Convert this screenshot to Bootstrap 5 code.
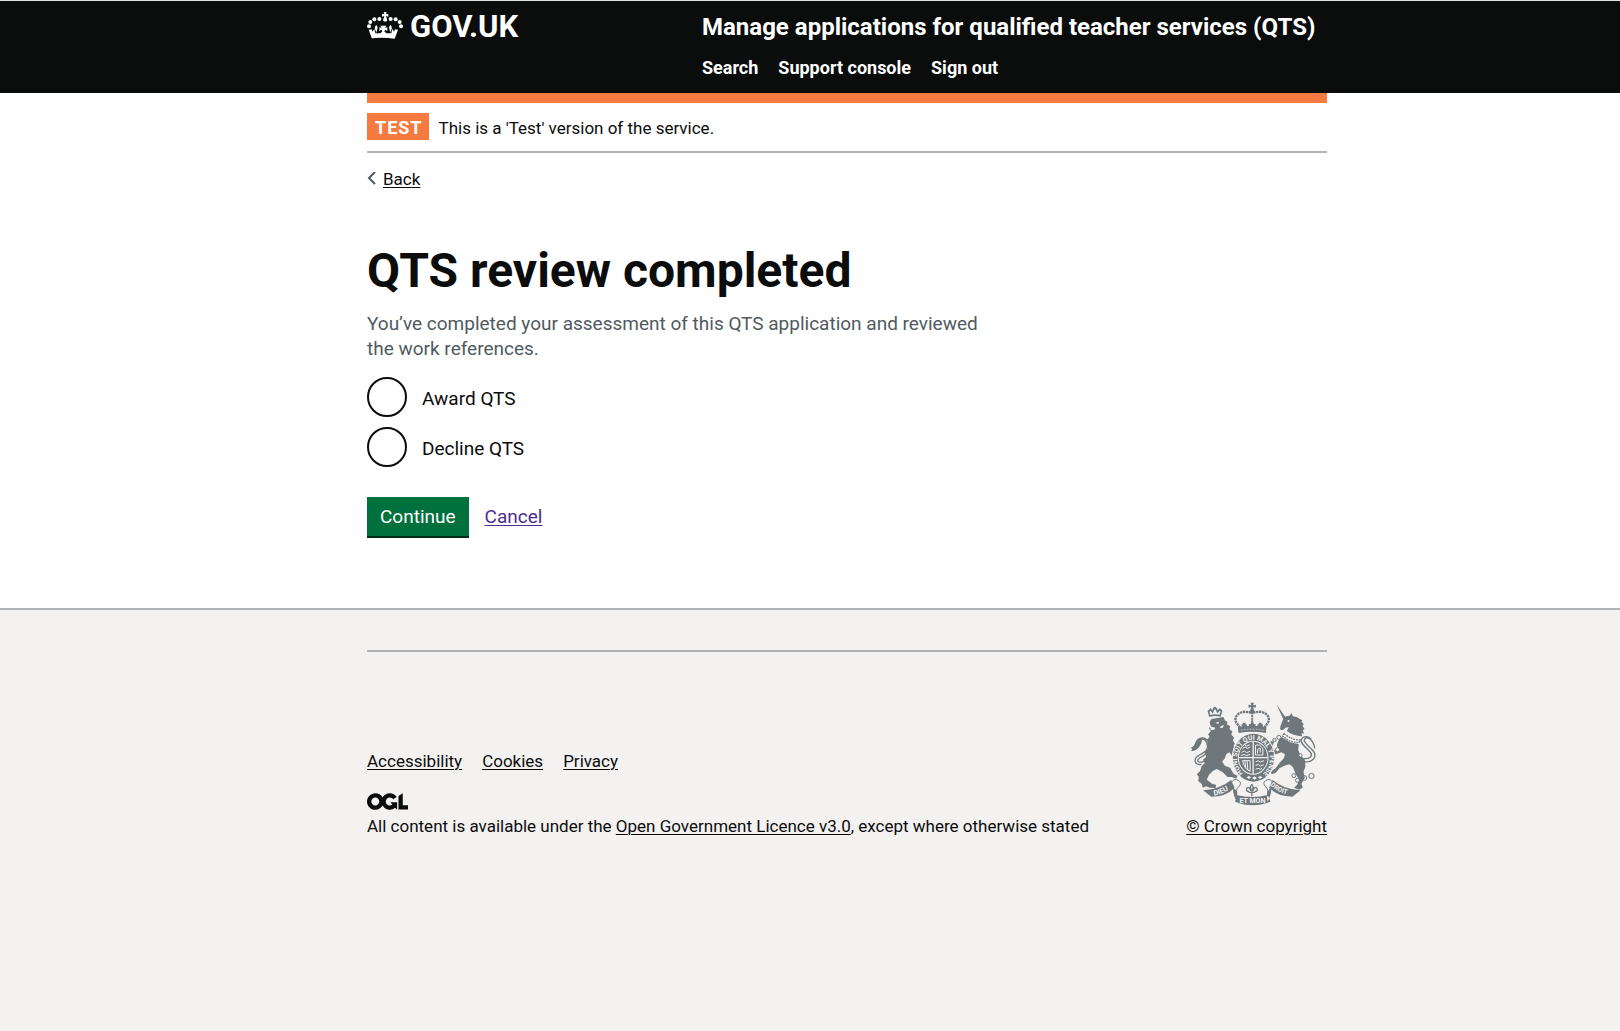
<!DOCTYPE html>
<html lang="en">
<head>
<meta charset="utf-8">
<meta name="viewport" content="width=device-width, initial-scale=1">
<title>QTS review completed</title>
<link rel="stylesheet" href="https://cdn.jsdelivr.net/npm/bootstrap@5.3.0/dist/css/bootstrap.min.css">
<style>
:root { --ink: #0b0c0c; --line: #b1b4b6; --tag: #f77a40; }
body { font-family: Roboto, "Liberation Sans", sans-serif; font-size: 17px; line-height: 20px; color: var(--ink); background: #f3f2f1; }
.page-width { max-width: 960px; }
.page-shell { padding-left: 74px; }
a { color: var(--ink); text-underline-offset: 2px; text-decoration-thickness: 1px; }
.masthead { background: var(--ink); border-top: 1px solid #dfe7e2; padding-bottom: 15px; }
.masthead a { color: #fff; text-decoration: none; }
.masthead-brand { width: 335px; padding-top: 11px; gap: 7px; }
.brand-name { font-size: 31px; line-height: 30px; font-weight: 700; }
.service-block { padding-top: 11px; }
.service-name { font-size: 24px; line-height: 30px; font-weight: 700; }
.service-nav { font-size: 18px; line-height: 21px; font-weight: 700; padding-top: 15px; }
.nav-gap { gap: 20px; }
.test-strip { height: 10px; background: var(--tag); }
.phase-banner { border-bottom: 2px solid var(--line); padding: 10px 0 11px; gap: 10px; }
.phase-tag { background: var(--tag); color: #fff; font-weight: 700; font-size: 18px; line-height: 25px; padding: 2px 6px 0 8px; letter-spacing: 1px; }
.back-link { gap: 6px; }
.main-area { padding: 56px 0 72px; }
h1 { font-size: 48px; line-height: 50px; font-weight: 700; margin-bottom: 15px; }
.hint-text { font-size: 19px; line-height: 25px; color: #505a5f; max-width: 630px; }
.choice-list { gap: 10px; }
.choice-label { font-size: 19px; line-height: 25px; padding: 2px 0 0 15px; }
.form-check-input.choice { width: 40px; height: 40px; border: 2px solid var(--ink); margin: 0; float: none; }
.action-row { margin-top: 30px; gap: 16px; }
.btn-go { font-size: 19px; line-height: 19px; color: #fff; background: #00703c; border: 0; border-radius: 0; box-shadow: 0 2px 0 #002d18; padding: 10px 13px; }
.btn-go:hover { background: #005a30; color: #fff; }
.cancel-link { color: #4c2c92; font-size: 19px; }
.page-footer { border-top: 2px solid var(--line); }
.page-footer hr { border-top: 2px solid var(--line); opacity: 1; margin: 40px 0 50px; }
.ogl-logo { margin: 22px 0 6px; }
.crest { margin: 0 10px 10px 0; overflow: visible; }
.crest text { font-family: Roboto, sans-serif; font-weight: 700; fill: #f3f2f1; }
</style>
</head>
<body>
<header class="masthead page-shell">
  <div class="page-width mx-auto d-flex">
    <a href="#" class="masthead-brand d-flex align-items-start" aria-label="GOV.UK">
      <svg width="36" height="27" viewBox="0 0 108 81" fill="#fff" aria-hidden="true">
        <path d="M50 0h9l-2 7 7-2v9l-7-2 4 13a7 7 0 0 1-13 0l4-13-7 2V5l7 2z"/>
        <circle cx="37" cy="21" r="6"/><circle cx="71" cy="21" r="6"/>
        <circle cx="22" cy="22" r="6"/><circle cx="86" cy="22" r="6"/>
        <circle cx="10" cy="30" r="6"/><circle cx="98" cy="30" r="6"/>
        <circle cx="6" cy="43" r="6"/><circle cx="102" cy="43" r="6"/>
        <path d="M15 80L5 53l9-1 3 7 5-9 3 14 4-1-4-9c-3-7-1-12 3-15 4 4 5 9 2 15l-2 9 12 1 6-6-3-5-6 4V45l7 4-4-8h18l-4 8 7-4v12l-6-4-3 5 6 6 12-1-2-9c-3-6-2-11 2-15 4 3 6 8 3 15l-4 9 4 1 3-14 5 9 3-7 9 1-10 27c-26-4-52-4-78 0z"/>
      </svg>
      <span class="brand-name">GOV.UK</span>
    </a>
    <div class="service-block">
      <a href="#" class="service-name d-block">Manage applications for qualified teacher services (QTS)</a>
      <nav class="service-nav nav-gap d-flex">
        <a href="#">Search</a><a href="#">Support console</a><a href="#">Sign out</a>
      </nav>
    </div>
  </div>
</header>

<div class="bg-white page-shell">
  <div class="page-width mx-auto">
    <div class="test-strip"></div>
    <div class="phase-banner d-flex align-items-baseline">
      <strong class="phase-tag">TEST</strong>
      <span>This is a 'Test' version of the service.</span>
    </div>
    <a href="#" class="back-link d-inline-flex align-items-center mt-3 text-decoration-none">
      <svg width="10" height="14" viewBox="0 0 10 14" fill="none" stroke="#505a5f" stroke-width="2" aria-hidden="true"><path d="M8 0L2 6l6 6"/></svg>
      <span class="text-decoration-underline">Back</span>
    </a>
    <main class="main-area">
      <h1>QTS review completed</h1>
      <form>
        <p class="hint-text mb-3">You’ve completed your assessment of this QTS application and reviewed the work references.</p>
        <div class="choice-list d-flex flex-column">
          <div class="d-flex align-items-center">
            <input class="form-check-input choice" type="radio" name="decision" id="award">
            <label class="choice-label" for="award">Award QTS</label>
          </div>
          <div class="d-flex align-items-center">
            <input class="form-check-input choice" type="radio" name="decision" id="decline">
            <label class="choice-label" for="decline">Decline QTS</label>
          </div>
        </div>
        <div class="action-row d-flex align-items-center">
          <button type="submit" class="btn btn-go">Continue</button>
          <a href="#" class="cancel-link">Cancel</a>
        </div>
      </form>
    </main>
  </div>
</div>

<footer class="page-footer page-shell">
  <div class="page-width mx-auto">
    <hr>
    <div class="d-flex justify-content-between align-items-end">
      <div>
        <nav class="nav-gap d-flex"><a href="#">Accessibility</a><a href="#">Cookies</a><a href="#">Privacy</a></nav>
        <svg class="ogl-logo d-block" width="41" height="17" viewBox="0 0 483 196" fill="#0b0c0c" role="img" aria-label="OGL"><path d="M421.500 142.800V.1l-50.700 32.300v161.100h112.400v-50.700zm-122.300-9.600A47.120 47.120 0 0 1 221 97.800c0-26 21.100-47.100 47.100-47.100 16.700 0 31.400 8.700 39.700 21.800l42.700-27.200A97.630 97.630 0 0 0 268.100 0c-36.500 0-68.300 20.100-85.100 49.700A98 98 0 0 0 97.800 0C43.900 0 0 43.900 0 97.800s43.900 97.800 97.800 97.800c36.500 0 68.300-20.100 85.100-49.700a97.760 97.760 0 0 0 149.600 25.400l19.400 22.200h3v-87.800h-80l24.300 27.500zM97.800 145c-26 0-47.100-21.100-47.100-47.100s21.100-47.100 47.100-47.100 47.100 21.100 47.100 47.100S123.800 145 97.800 145"/></svg>
        <div>All content is available under the <a href="#">Open Government Licence v3.0</a>, except where otherwise stated</div>
      </div>
      <div class="d-flex flex-column align-items-end">
        <svg class="crest" width="127" height="104" viewBox="60 183 380 312" fill="#6f777b" aria-hidden="true">
          <!-- central crown -->
          <path d="M241 185h10l-2 8 8-2v9l-8-2 2 8h-10l2-8-8 2v-9l8 2z"/>
          <circle cx="246" cy="211" r="7"/>
          <g fill="none" stroke="#6f777b">
            <path d="M243 216C214 204 190 224 197 241c3 9 11 13 14 23M249 216c29-12 53 8 46 25-3 9-11 13-14 23" stroke-width="7" stroke-dasharray="7 2"/>
            <path d="M246 214v40" stroke-width="6" stroke-dasharray="6 2"/>
            <path d="M222 264v-19m-8 9h16M270 264v-19m-8 9h16M246 262v-18m-10 9h20" stroke-width="8"/>
          </g>
          <path d="M203 259q43-10 86 0l-2 17q-41-8-82 0z"/>
          <path d="M212 268q34-7 68 0" fill="none" stroke="#f3f2f1" stroke-width="2" stroke-dasharray="5 4"/>
          <!-- lion -->
          <path d="M119 225l-4-14 6-6 6 8 4-10h7l4 10 7-8 5 5-4 14q-16-4-31 1z" fill="none" stroke="#6f777b" stroke-width="5"/>
          <circle cx="134" cy="201" r="4"/>
          <path d="M124 234L160 228L164 238L172 243L170 250L180 256L178 264L187 272L183 280L192 290L188 298L194 308L190 316L198 322L196 334L204 338L198 350L186 346L178 334L168 340L164 352L156 362L164 374L180 380L190 398L202 404L198 413L184 408L172 408L158 394L140 384L128 390L116 402L110 416L126 428L138 432L136 441L118 440L108 436L98 440L94 428L84 420L86 408L80 400L90 390L94 376L104 366L98 356L108 348L104 334L112 324L114 312L108 310L114 302L110 296L118 288L114 280L122 270L116 262L122 256L118 244z"/>
          <path d="M136 245l11-3-3 7zM151 256l10-4-3 8-8 1zM119 256l16 4-2 6-11 1z" fill="#f3f2f1"/>
          <g fill="none" stroke="#6f777b" stroke-width="4">
            <path d="M94 370C70 374 70 352 86 343c14-7 28-13 26-30-2-12-9-20-18-19M102 362c-18 4-25-2-14-11 16-8 31-18 30-36-2-14-10-25-22-24"/>
          </g>
          <path d="M100 290q-18-3-25 15-2 10-13 15l4 4-3 7q18-2 26-16 6-9 7-20z"/>
          <!-- unicorn -->
          <path d="M319 190l29 42-8 4zM340 232l8-6 10-2 6-8 4 10 12 2 9 6 8 4-3 4 7 8-4 4 6 10-5 4 4 10-8-2 2 10c-18-2-34-6-46-16l6-12-10 2-8 8-9-3 2-10z"/>
          <path d="M342 278q24 20 48 19l-3 8q-28 0-50-20z" fill="none" stroke="#6f777b" stroke-width="4" stroke-dasharray="5 3"/>
          <circle cx="355" cy="240" r="3" fill="#f3f2f1"/>
          <path d="M334 288L360 304L386 310L384 326L390 342L404 356L406 376L400 392L404 410L394 428L398 440L386 446L372 440L382 430L386 414L376 398L368 378L358 370L342 374L328 382L316 396L304 400L302 392L316 382L328 366L342 350L344 340L334 334L316 340L308 336L304 345L296 339L302 322L296 311L302 300L312 302L306 316L314 328L326 328L320 312L324 300z"/>
          <g fill="none" stroke="#6f777b" stroke-width="4">
            <path d="M402 362c22 4 38-12 30-28-8-14-26-22-30-36 3-15 26-8 32 24M400 352c18 4 28-8 22-16-8-12-26-22-29-36 2-18 22-16 31-4"/>
            <circle cx="424" cy="405" r="8" stroke-width="3"/><circle cx="403" cy="411" r="7" stroke-width="3"/><circle cx="382" cy="418" r="6" fill="#f3f2f1" stroke-width="3"/><circle cx="371" cy="404" r="6" fill="#f3f2f1" stroke-width="3"/><circle cx="326" cy="289" r="6" fill="#f3f2f1" stroke-width="3"/><circle cx="313" cy="297" r="5" fill="#f3f2f1" stroke-width="3"/><circle cx="322" cy="326" r="6" fill="#f3f2f1" stroke-width="3"/><circle cx="391" cy="343" r="5" fill="#f3f2f1" stroke-width="3"/>
          </g>
          <!-- garter and shield -->
          <ellipse cx="250" cy="350" rx="65" ry="75" fill="#f3f2f1"/>
          <ellipse cx="250" cy="350" rx="62" ry="72"/>
          <path id="garter" d="M219 396A49 56 0 1 1 281 396" fill="none"/>
          <text font-size="20"><textPath href="#garter">HONI SOIT QUI MAL Y PENSE</textPath></text>
          <ellipse cx="249" cy="350" rx="46" ry="51" fill="#f3f2f1"/>
          <ellipse cx="249" cy="350" rx="43" ry="48"/>
          <path d="M249 302v96M206 350h86" stroke="#f3f2f1" stroke-width="4"/>
          <g fill="none" stroke="#f3f2f1" stroke-width="3">
            <path d="M217 323l8-5 6 4 9-4M214 334l9-4 6 5 11-4M212 343l10-2 7 3 11-4M224 312l6 3 9-4"/>
            <path d="M256 363l8-4 6 4 12-4M256 374l9-4 6 5 10-4M256 385l8-3 6 3 6-4"/>
            <path d="M256 312h12l10 10v20h-22zM262 337v-12l8-4v14"/>
            <path d="M217 359h23v32q-17-6-23-32zM224 360l3 22M231 360l2 27"/>
          </g>
          <path d="M229 409l7-4 7 4-7 5zM246 411l7-5 7 5-7 5zM263 409l7-4 7 4-7 5z" fill="#f3f2f1"/>
          <!-- rose and motto ribbon -->
          <g fill="none" stroke="#6f777b" stroke-width="4">
            <path d="M245 430q-8 9 0 20 8-11 0-20M242 450c-2-14-14-12-13-3 1 5 6 5 7 2M248 450c2-14 14-12 13-3-1 5-6 5-7 2M235 454h20M245 452v14"/>
            <path d="M184 424q8-14 22-5 10 7 0 18-12 10-6 28M308 424q-8-14-22-5-10 7 0 18 12 10 6 28" stroke-width="3"/>
          </g>
          <path d="M99 448q48-2 84-31l10 23q-24 27-70 27zM391 448q-48-2-84-31l-10 23q24 27 70 27z"/>
          <path d="M188 438l13 14v30q-12-14-13-44zM304 438l-13 14v30q12-14 13-44zM199 462q47 12 94 0l8 20q-56 21-106 0z"/>
          <path id="mottoleft" d="M132 464Q166 458 196 431" fill="none"/>
          <path id="mottoright" d="M300 433Q326 458 376 466" fill="none"/>
          <text font-size="22"><textPath href="#mottoleft">DIEU</textPath></text>
          <text font-size="20"><textPath href="#mottoright">DROIT</textPath></text>
          <text x="247" y="487" font-size="21" text-anchor="middle">ET MON</text>
        </svg>
        <a href="#">© Crown copyright</a>
      </div>
    </div>
  </div>
</footer>
<script src="https://cdn.jsdelivr.net/npm/bootstrap@5.3.0/dist/js/bootstrap.bundle.min.js"></script>
</body>
</html>
